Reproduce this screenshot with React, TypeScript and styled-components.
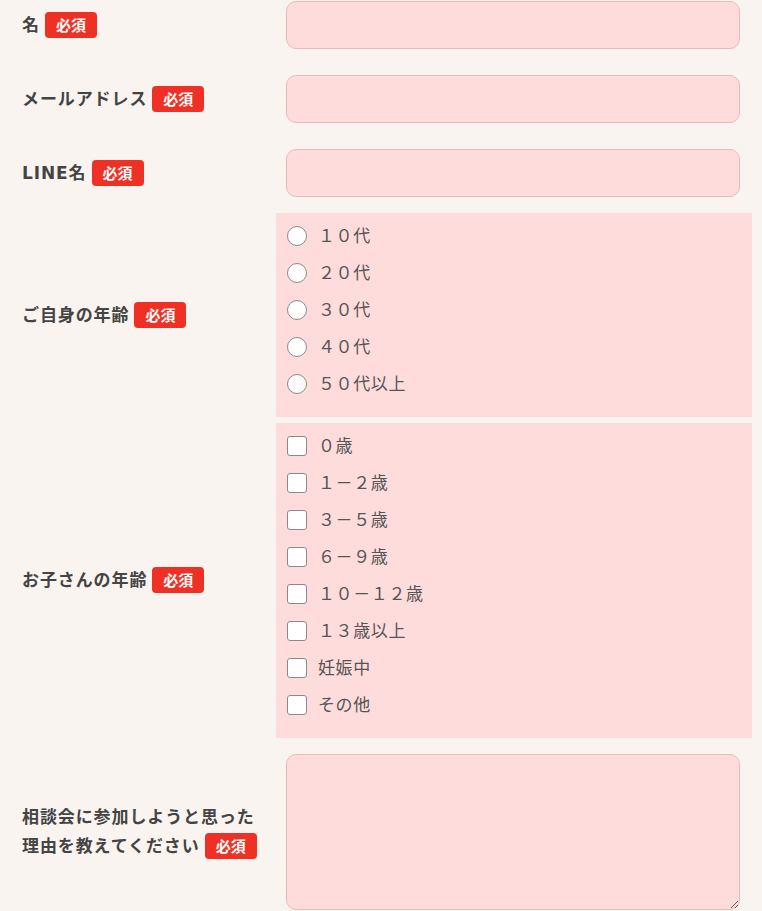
import React from 'react';
import styled, { createGlobalStyle } from 'styled-components';

const GlobalStyle = createGlobalStyle`
	html, body {
		margin: 0;
		padding: 0;
		background: #f9f4f0;
	}
	body {
		font-family: 'Noto Sans CJK JP', 'Noto Sans', sans-serif;
		color: #444;
	}
`;

const ages = ['１０代', '２０代', '３０代', '４０代', '５０代以上'];
const kids = ['０歳', '１－２歳', '３－５歳', '６－９歳', '１０－１２歳', '１３歳以上', '妊娠中', 'その他'];

function Required() {
	return <Badge>必須</Badge>;
}

export default function App() {
	return (
		<>
			<GlobalStyle />
			<Form>
				<Row>
					<Label>
						名<Required />
					</Label>
					<FieldCell>
						<TextInput type='text' />
					</FieldCell>
				</Row>
				<Row>
					<Label>
						メールアドレス<Required />
					</Label>
					<FieldCell>
						<TextInput type='email' />
					</FieldCell>
				</Row>
				<Row>
					<Label>
						LINE名<Required />
					</Label>
					<FieldCell>
						<TextInput type='text' />
					</FieldCell>
				</Row>
				<Row>
					<Label>
						ご自身の年齢<Required />
					</Label>
					<Group>
						{ages.map((a) => (
							<Option key={a}>
								<Radio type='radio' name='age' />
								<span>{a}</span>
							</Option>
						))}
					</Group>
				</Row>
				<Row>
					<Label>
						お子さんの年齢<Required />
					</Label>
					<Group>
						{kids.map((k) => (
							<Option key={k}>
								<Check type='checkbox' />
								<span>{k}</span>
							</Option>
						))}
					</Group>
				</Row>
				<Row>
					<Label>
						相談会に参加しようと思った
						<br />
						理由を教えてください<Required />
					</Label>
					<FieldCell>
						<TextArea />
					</FieldCell>
				</Row>
			</Form>
		</>
	);
}

const Form = styled.form`
	margin-top: -9px;
	display: flex;
	flex-direction: column;
	gap: 6px;
`;

const Row = styled.div`
	display: grid;
	grid-template-columns: 276px 476px;
	align-items: center;
`;

const Label = styled.div`
	padding-left: 22px;
	font-family: 'DejaVu Sans', 'Noto Sans CJK JP', sans-serif;
	font-size: 17px;
	font-weight: 700;
	letter-spacing: 0.9px;
	line-height: 29px;
	color: #444;
`;

const Badge = styled.span`
	display: inline-block;
	vertical-align: middle;
	margin-left: 5px;
	width: 52px;
	height: 26px;
	line-height: 26px;
	border-radius: 4px;
	background: #ee3124;
	color: #fff;
	font-family: 'Noto Sans CJK JP', sans-serif;
	font-size: 15px;
	font-weight: 700;
	letter-spacing: 0;
	text-align: center;
	position: relative;
	top: -1px;
`;

const FieldCell = styled.div`
	padding: 10px 12px 10px 10px;
`;

const TextInput = styled.input`
	display: block;
	box-sizing: border-box;
	width: 100%;
	height: 48px;
	border: 1px solid #efb9b9;
	border-radius: 10px;
	background: #ffdcdc;
	outline: none;
`;

const TextArea = styled.textarea`
	display: block;
	box-sizing: border-box;
	width: 100%;
	height: 156px;
	border: 1px solid #efb9b9;
	border-radius: 10px;
	background: #ffdcdc;
	outline: none;
	margin: 0;
`;

const Group = styled.div`
	background: #ffdcdc;
	padding: 4px 0 15px 11px;
`;

const Option = styled.label`
	display: flex;
	align-items: center;
	height: 37px;
	gap: 11px;
	font-size: 17px;
	color: #555;
	letter-spacing: 0.6px;
	line-height: 1;
	span {
		position: relative;
		top: -1px;
	}
`;

const Radio = styled.input`
	appearance: none;
	margin: 0;
	width: 20px;
	height: 20px;
	border: 1px solid #8a8a8a;
	border-radius: 50%;
	background: #fff;
	box-sizing: border-box;
`;

const Check = styled.input`
	appearance: none;
	margin: 0;
	width: 20px;
	height: 20px;
	border: 1px solid #8a8a8a;
	border-radius: 3px;
	background: #fff;
	box-sizing: border-box;
`;
